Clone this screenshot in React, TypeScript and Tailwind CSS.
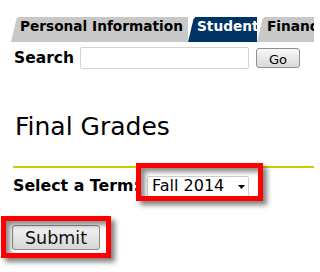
import React from "react";

const tabClip =
  "[clip-path:polygon(5.5px_2px,7.5px_0,100%_0,100%_100%,0_100%)]";

export default function App() {
  return (
    <div className="relative w-[314px] h-[272px] overflow-hidden bg-white text-black font-['DejaVu_Sans',sans-serif]">
      {/* Tabs */}
      <div className="flex ml-[11px] mt-[17px] h-[25px] text-[13.7px] font-bold leading-[16px] whitespace-nowrap">
        <div className={`w-[177px] flex-none bg-[#c8c8c8] pl-[9px] pt-[1px] ${tabClip}`}>
          Personal Information
        </div>
        <div className={`w-[69px] flex-none bg-[#003366] text-white pl-[9px] pt-[1px] overflow-hidden ${tabClip}`}>
          Student
        </div>
        <div className={`flex-none bg-[#c8c8c8] pl-[10px] pr-[20px] pt-[1px] ${tabClip}`}>
          Finance
        </div>
      </div>

      {/* Search */}
      <div className="flex items-start mt-[5px] pl-[14px] h-[22px]">
        <span className="w-[66px] flex-none text-[15.5px] font-bold leading-[normal] mt-[2px]">
          Search
        </span>
        <div className="w-[169px] h-[22px] flex-none border border-[#d3d3d3] rounded-[2px] bg-white" />
        <div className="ml-[7px] mt-[1px] w-[44px] h-[20px] flex-none rounded-[3px] border border-[#8f8f8f] bg-gradient-to-b from-[#f7f7f7] to-[#d9d9d9] flex items-center justify-center pt-[3px] text-[13px] leading-[normal]">
          Go
        </div>
      </div>

      {/* Heading */}
      <h1 className="mt-[43px] pl-[15px] text-[25px] leading-[30px] font-normal">
        Final Grades
      </h1>

      <div className="ml-[13px] mt-[24px] h-[2px] bg-[#cccc00]" />

      {/* Select a term */}
      <div className="flex items-start mt-[8px] pl-[13px]">
        <span className="w-[134px] flex-none text-[15.8px] font-bold leading-[normal] whitespace-nowrap">
          Select a Term:
        </span>
        <div className="relative flex-none">
          <div className="w-[102px] h-[21px] border border-[#d0d0d0] rounded-[2px] bg-white flex items-center justify-between pl-[4px] pr-[3px] pb-[2px] text-[16px] leading-[normal]">
            <span>Fall 2014</span>
            <svg width="7" height="4" viewBox="0 0 7 4" className="mt-[2px]">
              <polygon points="0,0 7,0 3.5,4" fill="#000" />
            </svg>
          </div>
          <div className="absolute -left-[11px] -top-[13px] -right-[14px] -bottom-[4px] border-[5px] border-[#ff0000] pointer-events-none shadow-[4px_4px_5px_rgba(0,0,0,0.5),inset_4px_4px_5px_rgba(0,0,0,0.45)]" />
        </div>
      </div>

      {/* Submit */}
      <div className="mt-[28px] pl-[12px]">
        <div className="relative w-[88px]">
          <div className="w-[88px] h-[25px] border border-[#8a8a8a] rounded-[3px] bg-gradient-to-b from-[#f4f4f4] to-[#d6d6d6] flex items-center justify-center text-[17.5px] leading-[normal] text-[#111]">
            Submit
          </div>
          <div className="absolute -left-[11px] -top-[9px] -right-[11px] -bottom-[8px] border-[5px] border-[#ff0000] pointer-events-none shadow-[4px_4px_5px_rgba(0,0,0,0.5),inset_4px_4px_5px_rgba(0,0,0,0.45)]" />
        </div>
      </div>
    </div>
  );
}
